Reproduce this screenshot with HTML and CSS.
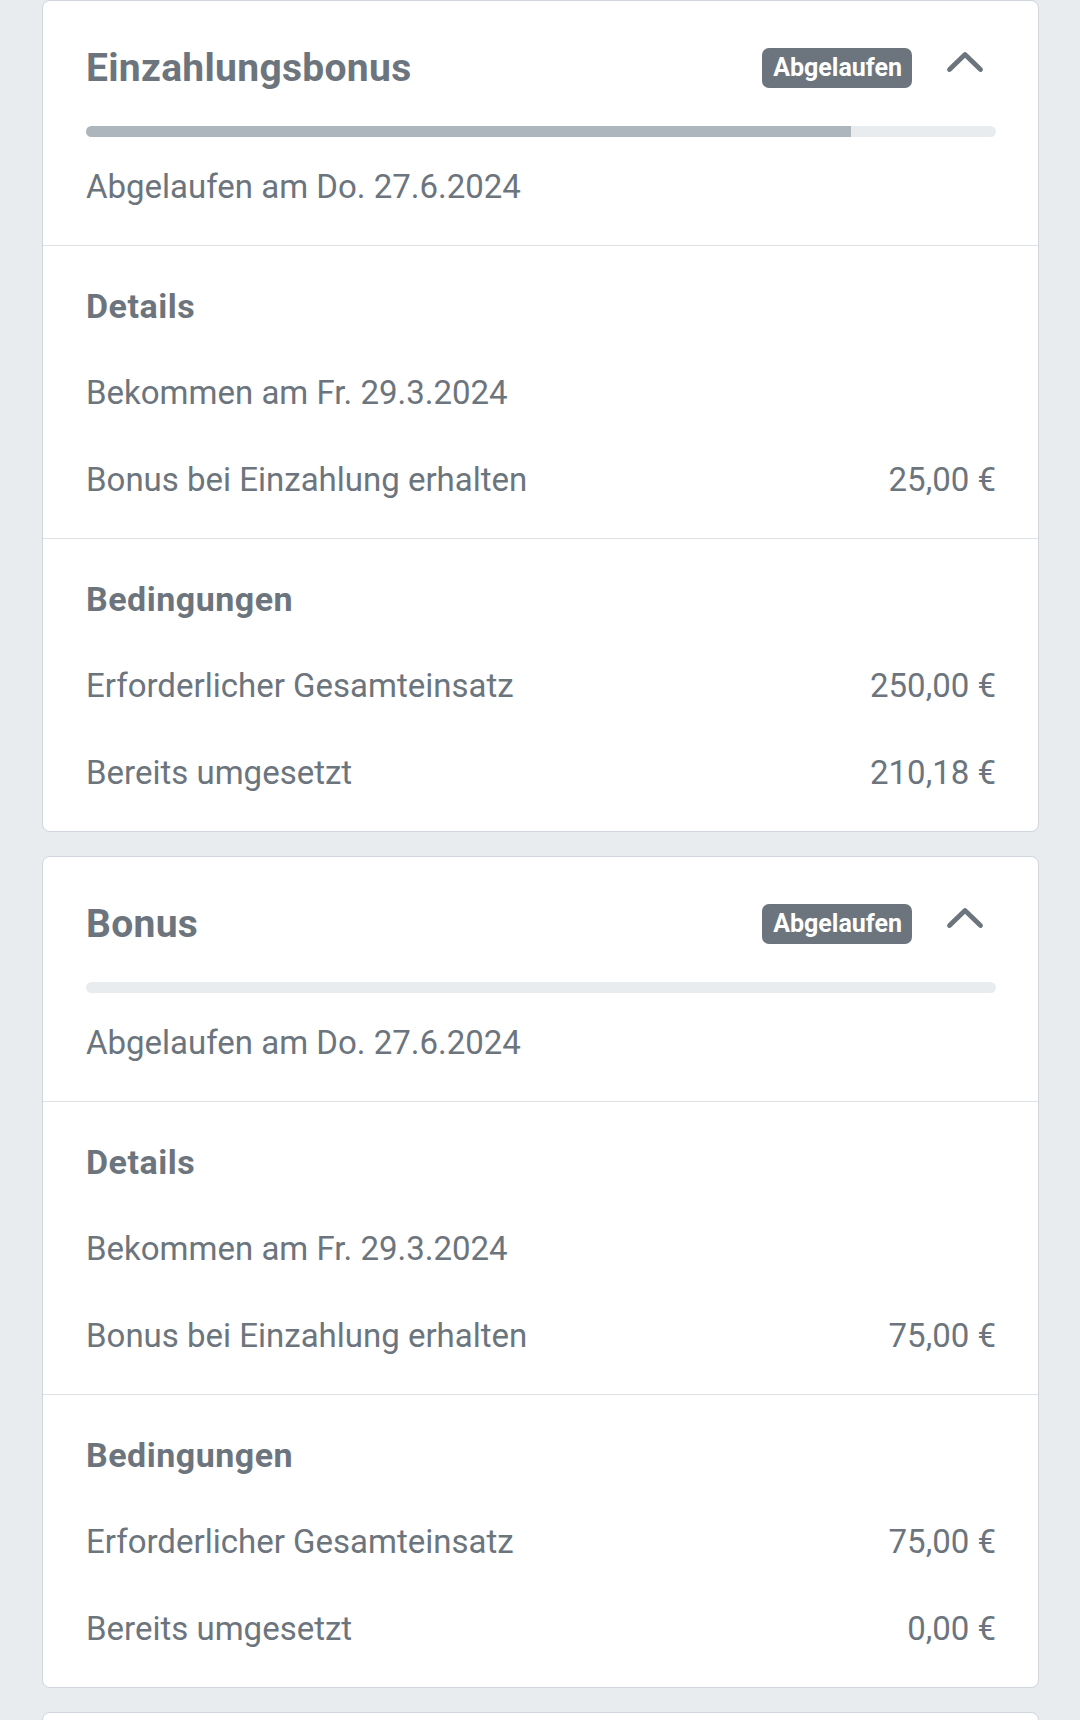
FILE: index.html
```html
<!DOCTYPE html>
<html>
  <head>
    <title>Boni</title>
    <link rel="stylesheet" href="styles.css">
  </head>
  <body>

    <div class="bonus-card">
      <div class="bonus-head">
        <div class="bonus-title-row">
          <h2 class="bonus-title">Einzahlungsbonus</h2>
          <span class="badge">Abgelaufen</span>
          <svg class="chevron" width="40" height="40" viewBox="0 0 40 40">
            <path d="M4.5 21.5 L20 6.5 L35.5 21.5" fill="none" stroke="#6c757d" stroke-width="4.8" stroke-linecap="round" stroke-linejoin="round"/>
          </svg>
        </div>
        <div class="progress">
          <div class="progress-fill" style="width: 84.07%"></div>
        </div>
        <p class="bonus-date">Abgelaufen am Do. 27.6.2024</p>
      </div>

      <div class="bonus-section">
        <h3 class="section-title">Details</h3>
        <div class="row"><span>Bekommen am Fr. 29.3.2024</span></div>
        <div class="row"><span>Bonus bei Einzahlung erhalten</span><span>25,00 €</span></div>
      </div>

      <div class="bonus-section">
        <h3 class="section-title">Bedingungen</h3>
        <div class="row"><span>Erforderlicher Gesamteinsatz</span><span>250,00 €</span></div>
        <div class="row"><span>Bereits umgesetzt</span><span>210,18 €</span></div>
      </div>
    </div>

    <div class="bonus-card">
      <div class="bonus-head">
        <div class="bonus-title-row">
          <h2 class="bonus-title">Bonus</h2>
          <span class="badge">Abgelaufen</span>
          <svg class="chevron" width="40" height="40" viewBox="0 0 40 40">
            <path d="M4.5 21.5 L20 6.5 L35.5 21.5" fill="none" stroke="#6c757d" stroke-width="4.8" stroke-linecap="round" stroke-linejoin="round"/>
          </svg>
        </div>
        <div class="progress">
          <div class="progress-fill" style="width: 0%"></div>
        </div>
        <p class="bonus-date">Abgelaufen am Do. 27.6.2024</p>
      </div>

      <div class="bonus-section">
        <h3 class="section-title">Details</h3>
        <div class="row"><span>Bekommen am Fr. 29.3.2024</span></div>
        <div class="row"><span>Bonus bei Einzahlung erhalten</span><span>75,00 €</span></div>
      </div>

      <div class="bonus-section">
        <h3 class="section-title">Bedingungen</h3>
        <div class="row"><span>Erforderlicher Gesamteinsatz</span><span>75,00 €</span></div>
        <div class="row"><span>Bereits umgesetzt</span><span>0,00 €</span></div>
      </div>
    </div>

    <div class="bonus-card bonus-card-empty"></div>

  </body>
</html>
```

FILE: styles.css
```css
body {
  margin: 0;
  padding: 0 41px 0 42px;
  background-color: #e9ecef;
  color: #6c757d;
  font-family: Roboto, "Liberation Sans", Arial, sans-serif;
  font-size: 33px;
  line-height: 40px;
}

.bonus-card {
  background-color: #fff;
  border: 1px solid #d1d6dc;
  border-radius: 8px;
  margin-bottom: 24px;
}

.bonus-card-empty {
  height: 400px;
}

.bonus-head {
  padding: 43px 42px 38px 43px;
  border-bottom: 1px solid #dee2e6;
}

.bonus-title-row {
  display: flex;
  align-items: center;
  height: 48px;
}

.bonus-title {
  flex-grow: 1;
  margin: 0;
  font-size: 39px;
  line-height: 48px;
  font-weight: bold;
  letter-spacing: 0.3px;
}

.badge {
  background-color: #6c757d;
  color: #fff;
  font-size: 25px;
  font-weight: bold;
  height: 40px;
  line-height: 40px;
  padding: 0 10px 0 11px;
  border-radius: 7px;
}

.chevron {
  display: block;
  margin-left: 33px;
  margin-right: 11px;
}

.progress {
  margin-top: 34px;
  height: 11px;
  border-radius: 6px;
  background-color: #e9ecef;
  overflow: hidden;
}

.progress-fill {
  height: 100%;
  background-color: #adb5bd;
}

.bonus-date {
  margin: 30px 0 0;
}

.bonus-section {
  display: flex;
  flex-direction: column;
  gap: 47px;
  padding: 40px 42px 38px 43px;
}

.bonus-section + .bonus-section {
  border-top: 1px solid #dee2e6;
}

.section-title {
  margin: 0;
  font-size: 34px;
  line-height: 40px;
  font-weight: bold;
  letter-spacing: 0.5px;
}

.row {
  display: flex;
  justify-content: space-between;
}
```
